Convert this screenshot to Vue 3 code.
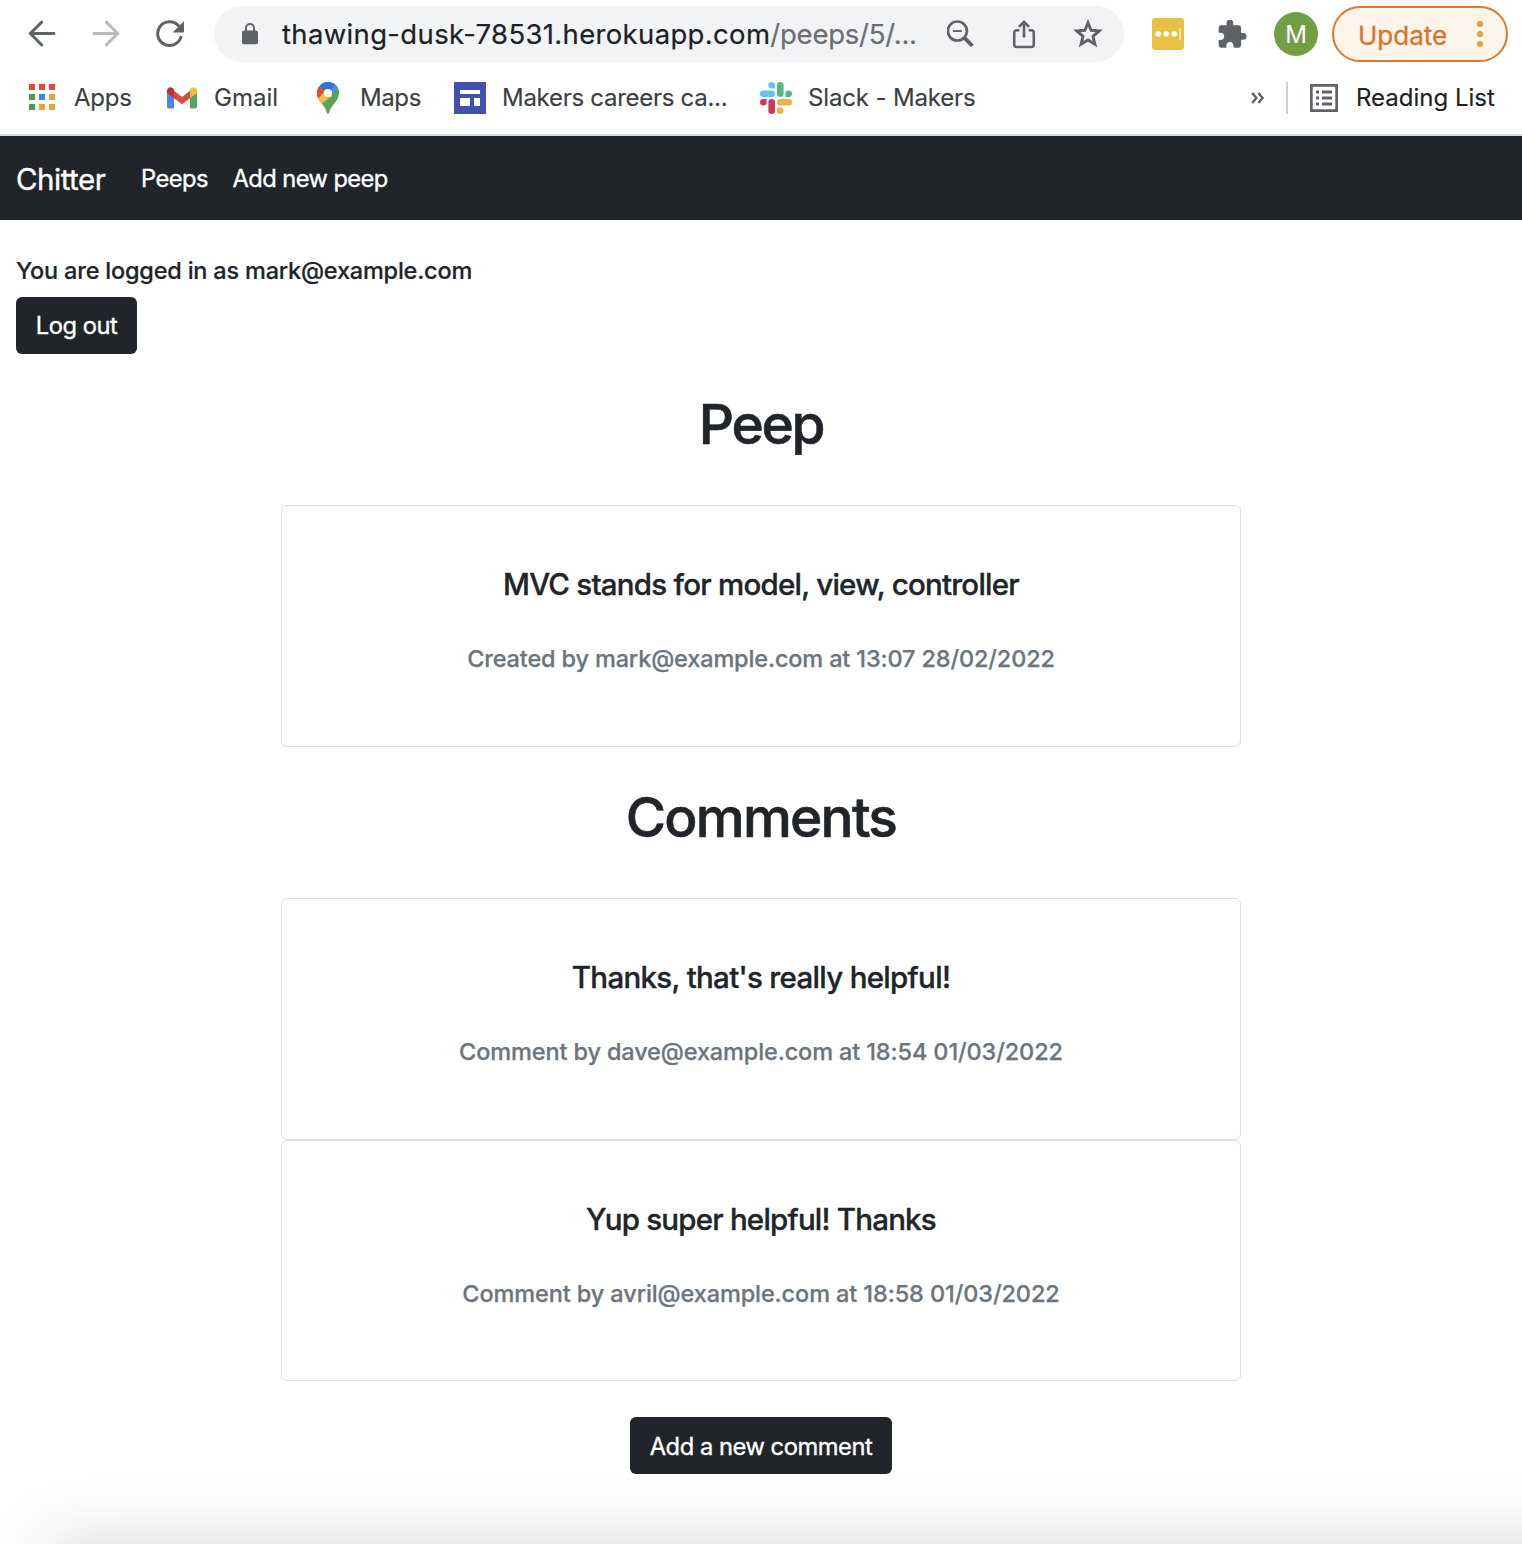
<script setup>
const appColors = ['#e8453c', '#e8453c', '#e8453c', '#4f9a5b', '#3b8beb', '#e8a33a', '#4f9a5b', '#e8a33a', '#e8a33a']
const comments = [
  { text: "Thanks, that's really helpful!", cls: 't2', meta: 'Comment by dave@example.com at 18:54 01/03/2022', mcls: 'm2' },
  { text: 'Yup super helpful! Thanks', cls: 't3', meta: 'Comment by avril@example.com at 18:58 01/03/2022', mcls: 'm3' },
]
</script>

<template>
  <div class="window">
    <header class="chrome">
      <div class="toolbar">
        <svg class="back" width="28" height="28" viewBox="0 0 28 28" fill="none" stroke="#5f6368" stroke-width="2.9" stroke-linecap="round"><path d="M26 13.500H3M13.700 2.100 2.300 13.500 13.700 24.900" /></svg>
        <svg class="forward" width="28" height="28" viewBox="0 0 28 28" fill="none" stroke="#bababb" stroke-width="2.9" stroke-linecap="round"><path d="M2 13.500H25M14.300 2.100 25.700 13.500 14.300 24.900" /></svg>
        <svg class="reload" width="28" height="28" viewBox="0 0 28 28"><path d="M24.900 17.3A11.9 11.9 0 1 1 22.400 5.600" fill="none" stroke="#5f6368" stroke-width="3" stroke-linecap="round" /><path d="M28 1v11.4H16.6z" fill="#5f6368" /></svg>
        <div class="address">
          <svg class="lock" width="16" height="22" viewBox="0 0 16 22"><rect y="7.5" width="16" height="13.8" rx="2" fill="#5f6368" /><path d="M4 8V5a4 4 0 0 1 8 0v3" fill="none" stroke="#5f6368" stroke-width="2" /></svg>
          <span class="url">thawing-dusk-78531.herokuapp.com<span class="path">/peeps/5/...</span></span>
          <svg class="zoom" width="28" height="28" viewBox="0 0 28 28" fill="none" stroke="#5f6368"><circle cx="10.4" cy="11" r="9.5" stroke-width="2.7" /><path d="M5.900 11h9" stroke-width="1.9" /><path d="m17.200 17.700 8.200 8.200" stroke-width="3.8" /></svg>
          <svg class="share" width="24" height="30" viewBox="0 0 24 30" fill="none" stroke="#5f6368" stroke-width="2.6"><path d="M7.500 11.2H5A2.8 2.8 0 0 0 2.2 14v11.2A2.8 2.8 0 0 0 5 28h14a2.8 2.8 0 0 0 2.8-2.8V14a2.8 2.8 0 0 0-2.8-2.8h-2.500M12 18.5V3M7 7.800 12 2.800l5 5" /></svg>
          <svg class="star" width="30" height="30" viewBox="0 0 30 30"><path d="M15 3.8 18.1 11.3 26.2 12 20 17.3 21.9 25.2 15 21 8.1 25.2 10 17.3 3.8 12 11.9 11.3z" fill="none" stroke="#5f6368" stroke-width="2.9" /></svg>
        </div>
        <svg class="dots-ext" width="32" height="32" viewBox="0 0 32 32"><rect width="32" height="32" rx="3" fill="#e8c245" /><g fill="#fff"><circle cx="6.2" cy="16" r="2.8" /><circle cx="14.2" cy="16" r="2.8" /><circle cx="22.2" cy="16" r="2.8" /><path d="M27.3 10.2h1.4v11.6h-1.4z" opacity=".8" /></g></svg>
        <svg class="puzzle" width="30" height="30" viewBox="0 0 24 24"><path transform="translate(-.8 -.4) scale(1.06)" d="M20.5 11H19V7c0-1.1-.9-2-2-2h-4V3.5a2.5 2.5 0 0 0-5 0V5H4c-1.1 0-1.99.9-1.99 2v3.8H3.5c1.49 0 2.7 1.21 2.7 2.7s-1.21 2.7-2.7 2.7H2V20c0 1.1.9 2 2 2h3.8v-1.5c0-1.49 1.21-2.7 2.7-2.7 1.49 0 2.7 1.21 2.7 2.7V22H17c1.1 0 2-.9 2-2v-4h1.5a2.5 2.5 0 0 0 0-5z" fill="#5f6368" /></svg>
        <div class="avatar">M</div>
        <div class="update"><span>Update</span><i class="kebab"><b /><b /><b /></i></div>
      </div>
      <div class="bookmarks">
        <div class="apps-grid"><i v-for="(c, i) in appColors" :key="i" :style="{ background: c }" /></div>
        <span class="b-apps">Apps</span>
        <svg class="gmail" width="30" height="22" viewBox="0 0 30 22"><path d="M0 5v14.8A1.7 1.7 0 0 0 1.7 21.500H7V9z" fill="#4f86ee" /><path d="M23 9v12.500h5.300A1.700 1.700 0 0 0 30 19.800V4z" fill="#57a55a" /><path d="M7 3.800 15 10l8-6.200v7.400L15 17.300 7 11.200z" fill="#db4c3e" /><path d="M0 3.500C0 .6 3.200-.8 5.400.900L7 2.200v9L0 6z" fill="#b7332b" /><path d="M30 3.500c0-2.900-3.200-4.300-5.400-2.600L23 2.200v9L30 6z" fill="#f3bd42" /></svg>
        <span class="b-gmail">Gmail</span>
        <svg class="pin" width="22" height="32" viewBox="0 0 22 32">
          <defs><clipPath id="pin-shape"><path d="M11 0a11 11 0 0 1 11 11c0 4-1.800 6.800-4.500 10.200C14.500 24.800 12.900 27.500 12.300 30.500 12 32.200 10 32.200 9.700 30.500 9.100 27.500 7.500 24.800 4.500 21.200 1.800 17.800 0 15 0 11A11 11 0 0 1 11 0z" /></clipPath></defs>
          <g clip-path="url(#pin-shape)"><path d="M0 0h22v32H0z" fill="#57a55a" /><path d="m11 11 9.500-9L14 0H0v3z" fill="#3174e0" /><path d="M18.500 2.500 24 0v6L11 24V11z" fill="#57a55a" /><path d="m11 11 8.500-9 .5 0L22 5 14 14z" fill="#5087ec" /><path d="M0 2.500 7.800 8 1.500 17H0z" fill="#db4c3e" /><path d="m0 18 7-8 8 4L4.500 22z" fill="#f3bd42" /></g>
          <circle cx="11" cy="11" r="4.100" fill="#fff" />
        </svg>
        <span class="b-maps">Maps</span>
        <svg class="sites" width="32" height="32" viewBox="0 0 32 32"><path d="M0 0h32v32H0z" fill="#4151b0" /><path d="M6 8h20v4H6zM6 16h10v8H6zM20 16h6v8h-6z" fill="#fff" /></svg>
        <span class="b-makers">Makers careers ca...</span>
        <svg class="slack" width="32" height="32" viewBox="0 0 32 32"><g fill="#63c5ee"><path d="M11.700 0a3.300 3.300 0 0 1 3.300 3.300v3.300h-3.300a3.300 3.300 0 0 1 0-6.600z" /><rect y="8.500" width="15" height="6.600" rx="3.300" /></g><g fill="#5ab580"><rect x="17" width="6.600" height="15.100" rx="3.300" /><path d="M25.400 15.100v-3.300a3.300 3.300 0 1 1 3.300 3.300z" /></g><g fill="#e7b34a"><rect x="17" y="17" width="15" height="6.600" rx="3.300" /><path d="M17 25.400h3.300a3.300 3.300 0 1 1-3.300 3.300z" /></g><g fill="#d0365e"><rect x="8.400" y="17" width="6.600" height="15" rx="3.300" /><path d="M6.600 17v3.300A3.300 3.300 0 1 1 3.300 17z" /></g></svg>
        <span class="b-slack">Slack - Makers</span>
        <svg class="more" width="14" height="12" viewBox="0 0 14 12" fill="none" stroke="#5f6368" stroke-width="2.400"><path d="M1.200 1 5.400 6 1.200 11M7.400 1l4.200 5-4.200 5" /></svg>
        <i class="divider" />
        <svg class="list-icon" width="28" height="28" viewBox="0 0 28 28"><path d="M1.350 1.350h25.300v25.300H1.350z" fill="none" stroke="#5f6368" stroke-width="2.700" /><path d="M6 6.500h3v3H6zM6 12.500h3v3H6zM6 18.500h3v3H6zM12 6.500h10v3H12zM12 12.500h10v3H12zM12 18.500h10v3H12z" fill="#5f6368" /></svg>
        <span class="b-reading">Reading List</span>
      </div>
    </header>

    <nav class="navbar">
      <a class="brand">Chitter</a>
      <a class="nav-peeps">Peeps</a>
      <a class="nav-add">Add new peep</a>
    </nav>

    <section class="session">
      <p class="who">You are logged in as mark@example.com</p>
      <button class="btn logout">Log out</button>
    </section>

    <main>
      <h1 class="h-peep">Peep</h1>
      <article class="card">
        <h5 class="t1">MVC stands for model, view, controller</h5>
        <h6 class="m1">Created by mark@example.com at 13:07 28/02/2022</h6>
      </article>
      <h1 class="h-comments">Comments</h1>
      <article v-for="c in comments" :key="c.text" class="card">
        <h5 :class="c.cls">{{ c.text }}</h5>
        <h6 :class="c.mcls">{{ c.meta }}</h6>
      </article>
      <button class="btn add">Add a new comment</button>
    </main>
    <div class="dock-shadow" />
  </div>
</template>

<style>
body {
  margin: 0;
  background: #fff;
}
</style>

<style scoped>
.window {
  position: relative;
  width: 1522px;
  height: 1544px;
  overflow: hidden;
  background: #fff;
  color: #212529;
  font-family: Inter, "Liberation Sans", sans-serif;
  white-space: nowrap;
}
svg, i { display: block; flex: none; }
.chrome {
  box-sizing: border-box;
  height: 136px;
  background: #fff;
  border-bottom: 2px solid #dcdddd;
}
.toolbar {
  display: flex;
  align-items: center;
  height: 68px;
  padding-left: 28px;
}
.forward { margin-left: 36px; }
.reload { margin-left: 36px; }
.address {
  display: flex;
  align-items: center;
  box-sizing: border-box;
  width: 910px;
  height: 56px;
  margin-left: 30px;
  padding-left: 28px;
  border-radius: 28px;
  background: #f1f3f4;
}
.url {
  width: 665px;
  margin-left: 24px;
  font-size: 27.5px;
  letter-spacing: .34px;
  color: #202124;
  -webkit-text-stroke: .2px;
}
.path { color: #6b6e70; letter-spacing: -.25px; }
.share { margin-left: 37px; }
.star { margin-left: 37px; }
.dots-ext { margin-left: 28px; }
.puzzle { margin-left: 33px; }
.avatar {
  width: 44px;
  height: 44px;
  margin-left: 27px;
  border-radius: 50%;
  background: #739e46;
  color: #fff;
  font-size: 24px;
  line-height: 45px;
  text-align: center;
}
.update {
  display: flex;
  align-items: center;
  box-sizing: border-box;
  width: 176px;
  height: 56px;
  margin-left: 14px;
  padding-left: 24px;
  border: 2px solid #d97a2e;
  border-radius: 28px;
  background: #fdf4ea;
  color: #d6752a;
  font-size: 26px;
  -webkit-text-stroke: .3px;
}
.update span { width: 119px; padding-top: 2px; }
.kebab { display: grid; gap: 4px; }
.kebab b { width: 6px; height: 6px; border-radius: 50%; background: #ea9c36; }
.bookmarks {
  display: flex;
  align-items: center;
  height: 60px;
  padding-left: 29px;
  font-size: 24px;
  color: #3c4043;
  -webkit-text-stroke: .15px;
}
.bookmarks span { padding-bottom: 2px; }
.apps-grid {
  display: grid;
  grid-template-columns: repeat(3, 6px);
  gap: 4px;
  padding-bottom: 2px;
}
.apps-grid i { height: 6px; }
.b-apps { width: 93px; margin-left: 19px; letter-spacing: -.2px; }
.b-gmail { width: 103px; margin-left: 17px; }
.b-maps { width: 94px; margin-left: 21px; letter-spacing: -.4px; }
.b-makers { width: 258px; margin-left: 16px; letter-spacing: -.28px; }
.b-slack { width: 443px; margin-left: 16px; letter-spacing: -.15px; }
.more { margin-bottom: 1px; }
.divider { width: 2px; height: 32px; margin-left: 21px; background: #cfd0d1; }
.list-icon { margin-left: 22px; }
.b-reading { margin-left: 18px; color: #202124; }
.navbar {
  display: flex;
  align-items: center;
  box-sizing: border-box;
  height: 84px;
  padding: 2px 16px 0;
  background: #212529;
  color: #fff;
  font-size: 23.7px;
  -webkit-text-stroke: .35px;
}
.brand { width: 125px; font-size: 29.5px; letter-spacing: -.5px; }
.nav-peeps { width: 91.500px; padding-bottom: 2px; letter-spacing: -.55px; }
.nav-add { padding-bottom: 2px; letter-spacing: -.57px; }
.session { padding: 33px 16px 0; }
.who {
  margin: 0 0 8px;
  font-size: 23.5px;
  line-height: 36px;
  font-weight: 500;
  letter-spacing: -.21px;
  -webkit-text-stroke: .2px;
}
.btn {
  display: block;
  height: 57px;
  padding: 0;
  border: 0;
  border-radius: 6px;
  background: #212529;
  color: #fff;
  font: 400 23.7px/58px Inter, "Liberation Sans", sans-serif;
  letter-spacing: -.45px;
  text-align: center;
  -webkit-text-stroke: .35px;
}
.logout { width: 121px; }
main {
  display: flex;
  flex-direction: column;
  align-items: center;
}
h1 {
  height: 72px;
  margin: 34px 0 45px;
  font-size: 55px;
  line-height: 72px;
  font-weight: 500;
  -webkit-text-stroke: .6px;
}
.h-peep { letter-spacing: -2.300px; }
.h-comments { letter-spacing: -1.750px; }
.card {
  box-sizing: border-box;
  width: 960px;
  height: 242px;
  padding-top: 60px;
  border: 1px solid #dedfdf;
  border-radius: 6px;
  text-align: center;
}
.card:last-of-type { height: 241px; }
h5 {
  margin: 0;
  font-size: 29.5px;
  line-height: 36px;
  font-weight: 500;
  -webkit-text-stroke: .35px;
}
.t1 { letter-spacing: -.76px; }
.t2 { letter-spacing: -.69px; }
.t3 { letter-spacing: -.79px; }
h6 {
  margin: 41px 0 0;
  font-size: 23.5px;
  line-height: 32px;
  font-weight: 500;
  color: #6c757d;
  -webkit-text-stroke: .25px;
}
.m1 { letter-spacing: -.15px; }
.m2 { letter-spacing: -.13px; }
.m3 { letter-spacing: -.11px; }
.add { width: 262px; margin-top: 36px; padding-top: 1px; }
.dock-shadow {
  position: absolute;
  left: 50px;
  top: 1544px;
  width: 1700px;
  height: 400px;
  box-shadow: 0 0 64px rgba(0, 0, 0, .17);
}
</style>
